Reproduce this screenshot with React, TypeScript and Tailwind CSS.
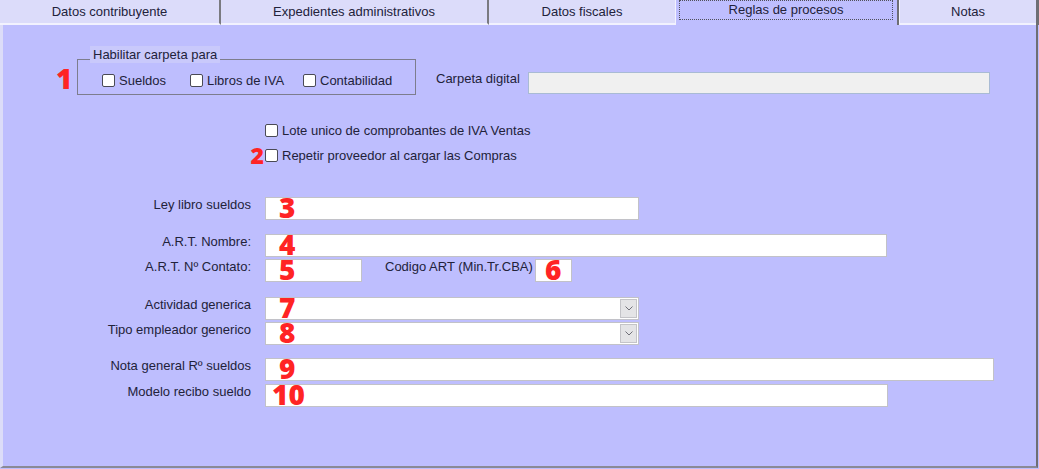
import React from 'react';

const NUM = "absolute top-[-1px] text-[28px] leading-[21px] font-extrabold text-[#ff2424] font-['Open_Sans',sans-serif] pointer-events-none";

function Check({ label }: { label: string }) {
  return (
    <div className="flex items-center">
      <span className="w-[13px] h-[13px] bg-white border border-[#4a4a55] rounded-[2px] shrink-0" />
      <span className="ml-[4px] leading-[15px] whitespace-nowrap">{label}</span>
    </div>
  );
}

function Field({ w, num, numPos = 'left-[13px]', select = false }: { w: string; num: string; numPos?: string; select?: boolean }) {
  return (
    <div className={'relative h-[23px] bg-white border border-[#c2c2c8] shrink-0 ' + w}>
      <span className={NUM + ' ' + numPos}>{num}</span>
      {select && (
        <div className="absolute right-[1px] top-[1px] bottom-[1px] w-[17px] bg-[#e4e4e6] border border-[#c4c4c8] flex items-center justify-center">
          <svg width="8" height="5" viewBox="0 0 8 5">
            <polyline points="0.5,0.5 4,4 7.5,0.5" fill="none" stroke="#707078" strokeWidth="1" />
          </svg>
        </div>
      )}
    </div>
  );
}

function Label({ text }: { text: string }) {
  return <div className="w-[248px] shrink-0 text-right leading-[15px] whitespace-nowrap">{text}</div>;
}

export default function App() {
  const tabs = 'h-[25px] bg-[#dcdcfa] border-b-2 border-b-[#f2f2fe] flex items-center justify-center shrink-0';

  return (
    <div className="w-[1039px] h-[469px] bg-[#bebefe] overflow-hidden font-['Liberation_Sans',Arial,sans-serif] text-[13px] text-[#22223a]">
      {/* tab strip */}
      <div className="flex h-[25px]">
        <div className={tabs + ' w-[221px] border-r-2 border-r-[#7a7a80]'}>Datos contribuyente</div>
        <div className={tabs + ' w-[268px] border-r-2 border-r-[#7a7a80]'}>Expedientes administrativos</div>
        <div className={tabs + ' w-[187px] border-r border-r-[#f2f2fe]'}>Datos fiscales</div>
        <div className="h-[25px] w-[223px] bg-[#bebefe] border-r-2 border-r-[#6e6e74] shrink-0 pl-[3px]">
          <div className="w-[214px] h-[20px] border border-dotted border-[#50505a] flex items-center justify-center">
            Reglas de procesos
          </div>
        </div>
        <div className={tabs + ' w-[137px] border-l border-l-[#f4f4ff]'}>Notas</div>
        <div className="w-[3px] h-[25px] bg-[#6e6e74]" />
      </div>

      {/* panel */}
      <div className="h-[443px] w-[1038px] border-l-[3px] border-l-[#dcdcf8] border-r-2 border-r-[#6e6e74] border-b-2 border-b-[#8a8a96] flex flex-col">
        {/* Habilitar carpeta */}
        <div className="flex items-start mt-[34px] h-[36px]">
          <span className="ml-[53px] w-[21px] mt-[5px] text-[28px] leading-[28px] font-extrabold text-[#ff2424] font-['Open_Sans',sans-serif]">1</span>
          <div className="relative w-[339px] h-[36px] border border-[#7d7d8d] shrink-0">
            <span className="absolute left-[12px] top-[-14px] h-[17px] px-[3px] leading-[17px] bg-[#c9c9fb] whitespace-nowrap">
              Habilitar carpeta para
            </span>
            <div className="flex items-center h-full pt-[7px] pl-[24px]">
              <div className="w-[88px]"><Check label="Sueldos" /></div>
              <div className="w-[113px]"><Check label="Libros de IVA" /></div>
              <Check label="Contabilidad" />
            </div>
          </div>
          <div className="ml-[20px] w-[92px] mt-[12px] leading-[15px] whitespace-nowrap">Carpeta digital</div>
          <div className="mt-[13px] w-[462px] h-[22px] bg-[#f0f0f0] border border-[#a9bbd4]" />
        </div>

        {/* checkbox options */}
        <div className="flex items-center mt-[28px] h-[15px]">
          <div className="w-[262px] shrink-0" />
          <Check label="Lote unico de comprobantes de IVA Ventas" />
        </div>
        <div className="flex items-center mt-[9px] h-[16px]">
          <div className="w-[262px] shrink-0 flex justify-end">
            <span className="text-[23px] leading-[16px] font-extrabold text-[#ff2424] font-['Open_Sans',sans-serif] mr-[1px]">2</span>
          </div>
          <Check label="Repetir proveedor al cargar las Compras" />
        </div>

        {/* fields */}
        <div className="flex items-start mt-[34px]">
          <Label text="Ley libro sueldos" />
          <div className="ml-[14px]"><Field w="w-[374px]" num="3" /></div>
        </div>
        <div className="flex items-start mt-[14px]">
          <Label text="A.R.T. Nombre:" />
          <div className="ml-[14px]"><Field w="w-[622px]" num="4" /></div>
        </div>
        <div className="flex items-start mt-[2px]">
          <Label text="A.R.T. Nº Contato:" />
          <div className="ml-[14px]"><Field w="w-[97px]" num="5" /></div>
          <div className="ml-[23px] w-[150px] leading-[15px] whitespace-nowrap">Codigo ART (Min.Tr.CBA)</div>
          <Field w="w-[37px]" num="6" numPos="left-[9px]" />
        </div>
        <div className="flex items-start mt-[15px]">
          <Label text="Actividad generica" />
          <div className="ml-[14px]"><Field w="w-[374px]" num="7" select /></div>
        </div>
        <div className="flex items-start mt-[2px]">
          <Label text="Tipo empleador generico" />
          <div className="ml-[14px]"><Field w="w-[374px]" num="8" select /></div>
        </div>
        <div className="flex items-start mt-[13px]">
          <Label text="Nota general Rº sueldos" />
          <div className="ml-[14px]"><Field w="w-[729px]" num="9" /></div>
        </div>
        <div className="flex items-start mt-[3px]">
          <Label text="Modelo recibo sueldo" />
          <div className="ml-[14px]"><Field w="w-[623px]" num="10" numPos="left-[6px]" /></div>
        </div>
      </div>
    </div>
  );
}
